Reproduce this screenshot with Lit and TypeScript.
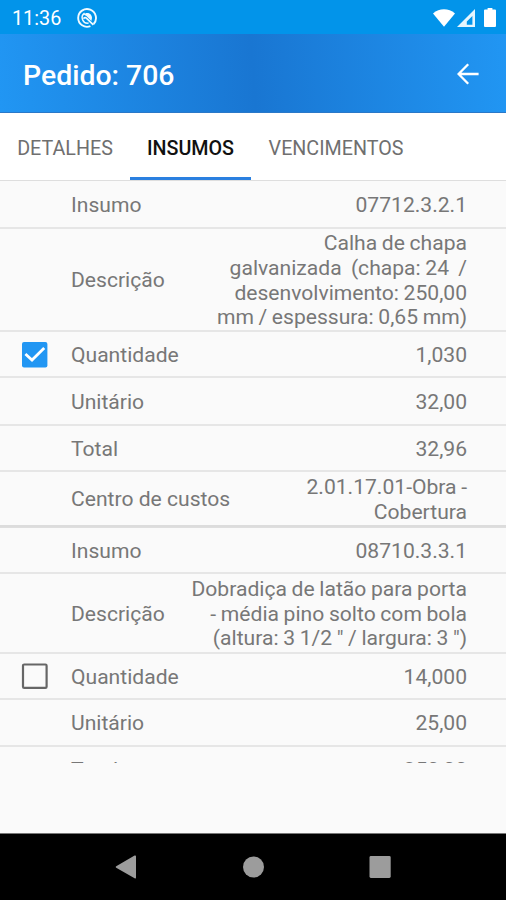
import { LitElement, html, css, svg } from "lit";
import { customElement, property, state } from "lit/decorators.js";
import { classMap } from "lit/directives/class-map.js";

interface Field {
  label: string;
  value: string;
  height: number;
}

interface Item {
  id: string;
  checked: boolean;
  fields: Field[];
}

const ITEMS: Item[] = [
  {
    id: "07712.3.2.1",
    checked: true,
    fields: [
      { label: "Insumo", value: "07712.3.2.1", height: 48 },
      {
        label: "Descrição",
        value: "Calha de chapa\ngalvanizada  (chapa: 24  /\ndesenvolvimento: 250,00\nmm / espessura: 0,65 mm)",
        height: 103,
      },
      { label: "Quantidade", value: "1,030", height: 46 },
      { label: "Unitário", value: "32,00", height: 48 },
      { label: "Total", value: "32,96", height: 46 },
      { label: "Centro de custos", value: "2.01.17.01-Obra -\nCobertura", height: 55 },
    ],
  },
  {
    id: "08710.3.3.1",
    checked: false,
    fields: [
      { label: "Insumo", value: "08710.3.3.1", height: 46 },
      {
        label: "Descrição",
        value: "Dobradiça de latão para porta\n- média pino solto com bola\n(altura: 3 1/2 \" / largura: 3 \")",
        height: 80,
      },
      { label: "Quantidade", value: "14,000", height: 46 },
      { label: "Unitário", value: "25,00", height: 47 },
      { label: "Total", value: "350,00", height: 47 },
    ],
  },
];

@customElement("status-bar")
export class StatusBar extends LitElement {
  static styles = css`
    :host {
      display: flex;
      align-items: center;
      height: 34px;
      box-sizing: border-box;
      padding: 1px 10px 0 12px;
      background: #0294ea;
      color: #fff;
    }
    .time {
      font-size: 19.8px;
      line-height: 34px;
      padding-top: 2px;
      width: 65px;
    }
    .grow { flex: 1; }
    svg { display: block; }
    .wifi { margin-right: 2px; }
    .signal { margin-right: 9px; }
  `;
  render() {
    return html`
      <span class="time">11:36</span>
      <svg width="20" height="20" viewBox="0 0 20 20" fill="none" stroke="#f0faff">
        <path d="M16.6 16A8.9 8.9 0 1 0 13.4 18.2" stroke-width="1.9" />
        <path d="M7.6 5.2A5.4 5.4 0 0 0 11.6 15" stroke-width="1.5" />
        <path d="M6.6 6.6C9.6 3.4 15 5.4 15 10L14.4 13L9.4 8Z" fill="#f0faff" stroke="none" />
        <path d="M6.4 10.6Q8 8.8 9.4 10.2L16.4 16.8" stroke-width="1.8" />
      </svg>
      <span class="grow"></span>
      <svg class="wifi" width="22" height="18" viewBox="0 0 22 18" fill="#fff">
        <path d="M0 4.4C6.4-1.1 15.6-1.1 22 4.4L11 17.8Z" />
      </svg>
      <svg class="signal" width="18" height="18" viewBox="0 0 18 18">
        <path d="M0 18L18 0V18ZM9.8 15.8H15.4V7L9.8 12.4Z" fill="#e6f5fd" fill-rule="evenodd" />
      </svg>
      <svg width="12" height="19" viewBox="0 0 12 19" fill="#fff">
        <path d="M3.6 0H8.4V1.6H11Q12 1.6 12 2.6V18Q12 19 11 19H1Q0 19 0 18V2.6Q0 1.6 1 1.6H3.6Z" />
      </svg>
    `;
  }
}

@customElement("order-header")
export class OrderHeader extends LitElement {
  @property() heading = "";
  static styles = css`
    :host {
      display: flex;
      align-items: center;
      justify-content: space-between;
      height: 79px;
      box-sizing: border-box;
      padding: 4px 27px 0 23px;
      background: linear-gradient(86deg, #2196f3 0%, #1976d2 50%, #2196f3 100%);
      border-bottom: 1px solid #2a78c8;
      color: #fff;
    }
    .title {
      font-size: 28.4px;
      font-weight: 500;
    }
    svg { display: block; margin-bottom: 3px; }
  `;
  render() {
    return html`
      <span class="title">${this.heading}</span>
      <svg width="22" height="22" viewBox="0 0 22 22" fill="none" stroke="#fff" stroke-width="2.3">
        <path d="M21.6 11H1.8M11.2 1.2L1.6 11L11.2 20.8" />
      </svg>
    `;
  }
}

@customElement("tab-strip")
export class TabStrip extends LitElement {
  @property({ attribute: false }) tabs: string[] = [];
  @state() private active = 1;
  static styles = css`
    :host {
      display: flex;
      height: 67px;
      background: #fff;
    }
    .tab {
      box-sizing: border-box;
      border: 0;
      padding: 7px 0 0;
      background: none;
      font: 400 19.7px/1 Roboto, sans-serif;
      color: #6f6f6f;
      border-bottom: 3px solid transparent;
    }
    .tab:nth-child(1) { width: 130px; }
    .tab:nth-child(2) { width: 121px; }
    .tab:nth-child(3) { width: 170px; }
    .active {
      color: #111;
      font-weight: 500;
      border-bottom-color: #2a80e0;
    }
  `;
  render() {
    return this.tabs.map(
      (t, i) => html`<button
        class=${classMap({ tab: true, active: i === this.active })}
        @click=${() => (this.active = i)}
      >${t}</button>`
    );
  }
}

@customElement("check-box")
export class CheckBox extends LitElement {
  @property({ type: Boolean }) checked = false;
  static styles = css`
    :host { display: block; width: 26px; height: 26px; margin-top: -2px; }
    svg { display: block; overflow: visible; }
  `;
  render() {
    return html`<svg width="26" height="26" viewBox="0 0 26 26" fill="none">
      ${this.checked
        ? svg`<rect x="0" y="1" width="25.4" height="25.4" rx="2" fill="#2196f3" />
            <path d="M3.4 13L10 19L22.2 7" stroke="#fff" stroke-width="2.8" />`
        : svg`<rect x="1" y="1.5" width="23.6" height="23.4" rx="1.2" stroke="#666" stroke-width="2.2" />`}
    </svg>`;
  }
}

@customElement("supply-item")
export class SupplyItem extends LitElement {
  @property({ attribute: false }) item!: Item;
  static styles = css`
    :host { display: block; border-bottom: 1px solid #dedede; }
    .row {
      display: grid;
      grid-template-columns: 49px auto 1fr;
      align-items: center;
      box-sizing: border-box;
      padding: 2px 39px 0 22px;
      border-bottom: 2px solid #e6e6e6;
      color: #777;
      font-size: 21.1px;
      line-height: 24.6px;
    }
    .row:last-child { border-bottom-color: #dcdcdc; }
    .label { white-space: nowrap; }
    .value { white-space: pre; text-align: right; word-spacing: -0.6px; }
  `;
  render() {
    return this.item.fields.map(
      (f) => html`<div class="row" style="height:${f.height}px">
        <span>${f.label === "Quantidade"
          ? html`<check-box ?checked=${this.item.checked}></check-box>`
          : ""}</span>
        <span class="label">${f.label}</span>
        <span class="value">${f.value}</span>
      </div>`
    );
  }
}

@customElement("system-nav")
export class SystemNav extends LitElement {
  static styles = css`
    :host {
      display: flex;
      align-items: center;
      justify-content: space-between;
      height: 67px;
      box-sizing: border-box;
      padding: 0 115px;
      background: #000;
      border-top: 1px solid #777;
    }
    svg { display: block; }
  `;
  render() {
    return html`
      <svg width="22" height="24" viewBox="0 0 22 24" fill="#9c9c9c">
        <path d="M19.6 0.6Q21 0 21 1.5V22.5Q21 24 19.6 23.2L1.2 12.7Q0 12 1.2 11.2Z" />
      </svg>
      <svg width="22" height="22" viewBox="0 0 22 22" fill="#9c9c9c"><circle cx="11.5" cy="11" r="10.5" /></svg>
      <svg width="22" height="22" viewBox="0 0 22 22" fill="#9c9c9c"><rect x="0.5" width="21.2" height="22" rx="1.4" /></svg>
    `;
  }
}

@customElement("app-root")
export class AppRoot extends LitElement {
  static styles = css`
    :host {
      display: flex;
      flex-direction: column;
      width: 506px;
      height: 900px;
      overflow: hidden;
      background: #fafafa;
      font-family: Roboto, sans-serif;
    }
    .list {
      height: 583px;
      box-sizing: border-box;
      overflow: hidden;
      border-top: 1px solid #dedede;
      margin-bottom: 70px;
    }
  `;
  render() {
    return html`
      <status-bar></status-bar>
      <order-header heading="Pedido: 706"></order-header>
      <tab-strip .tabs=${["DETALHES", "INSUMOS", "VENCIMENTOS"]}></tab-strip>
      <div class="list">
        ${ITEMS.map((i) => html`<supply-item .item=${i}></supply-item>`)}
      </div>
      <system-nav></system-nav>
    `;
  }
}
